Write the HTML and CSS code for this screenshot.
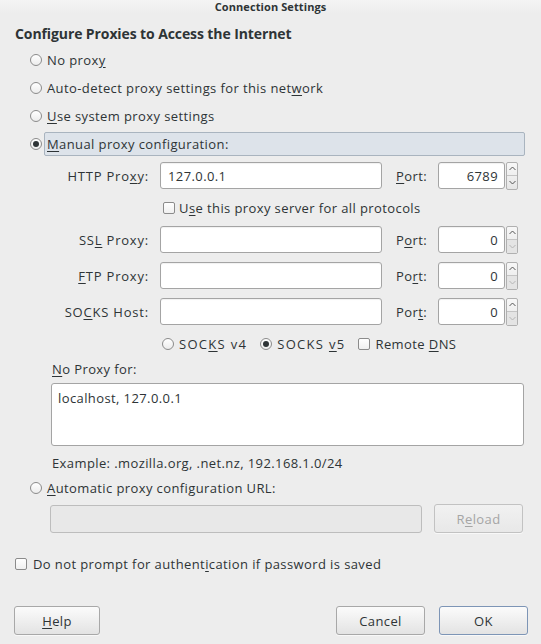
FILE: index.html
```html
<!DOCTYPE html>
<html>
<head>
<meta charset="utf-8">
<link rel="stylesheet" href="styles.css">
</head>
<body>
<div class="titlebar"><span>Connection Settings</span></div>
<div class="dialog">
  <h1 class="heading">Configure Proxies to Access the Internet</h1>
  <div class="options">
    <label class="opt"><span class="radio"></span><span class="txt">No prox<u>y</u></span></label>
    <label class="opt"><span class="radio"></span><span class="txt">Auto-detect proxy settings for this net<u>w</u>ork</span></label>
    <label class="opt"><span class="radio"></span><span class="txt"><u>U</u>se system proxy settings</span></label>
    <label class="opt manual"><span class="radio checked"></span><span class="txt hl"><u>M</u>anual proxy configuration:</span></label>
  </div>

  <div class="proxy-grid">
    <span class="lbl">HTTP Pro<u>x</u>y:</span>
    <input class="entry" value="127.0.0.1">
    <span class="plbl"><u>P</u>ort:</span>
    <div class="spin"><input class="entry num" value="6789"><span class="spinbtns"><span class="sb up"><svg width="7" height="5" viewBox="0 0 7 5"><path d="M0.5 4 L3.5 1 L6.5 4" fill="none" stroke="#555" stroke-width="1"/></svg></span><span class="sb down"><svg width="7" height="5" viewBox="0 0 7 5"><path d="M0.5 1 L3.5 4 L6.5 1" fill="none" stroke="#555" stroke-width="1"/></svg></span></span></div>

    <label class="allproto"><span class="check"></span><span>U<u>s</u>e this proxy server for all protocols</span></label>

    <span class="lbl">SS<u>L</u> Proxy:</span>
    <input class="entry" value="">
    <span class="plbl">P<u>o</u>rt:</span>
    <div class="spin"><input class="entry num" value="0"><span class="spinbtns"><span class="sb up"><svg width="7" height="5" viewBox="0 0 7 5"><path d="M0.5 4 L3.5 1 L6.5 4" fill="none" stroke="#555" stroke-width="1"/></svg></span><span class="sb down dis"><svg width="7" height="5" viewBox="0 0 7 5"><path d="M0.5 1 L3.5 4 L6.5 1" fill="none" stroke="#b5b5b5" stroke-width="1"/></svg></span></span></div>

    <span class="lbl"><u>F</u>TP Proxy:</span>
    <input class="entry" value="">
    <span class="plbl">Po<u>r</u>t:</span>
    <div class="spin"><input class="entry num" value="0"><span class="spinbtns"><span class="sb up"><svg width="7" height="5" viewBox="0 0 7 5"><path d="M0.5 4 L3.5 1 L6.5 4" fill="none" stroke="#555" stroke-width="1"/></svg></span><span class="sb down dis"><svg width="7" height="5" viewBox="0 0 7 5"><path d="M0.5 1 L3.5 4 L6.5 1" fill="none" stroke="#b5b5b5" stroke-width="1"/></svg></span></span></div>

    <span class="lbl">SO<u>C</u>KS Host:</span>
    <input class="entry" value="">
    <span class="plbl">Por<u>t</u>:</span>
    <div class="spin"><input class="entry num" value="0"><span class="spinbtns"><span class="sb up"><svg width="7" height="5" viewBox="0 0 7 5"><path d="M0.5 4 L3.5 1 L6.5 4" fill="none" stroke="#555" stroke-width="1"/></svg></span><span class="sb down dis"><svg width="7" height="5" viewBox="0 0 7 5"><path d="M0.5 1 L3.5 4 L6.5 1" fill="none" stroke="#b5b5b5" stroke-width="1"/></svg></span></span></div>

    <div class="socksver">
      <label class="item socks"><span class="radio"></span><span>SOC<u>K</u>S v4</span></label>
      <label class="item socks"><span class="radio checked"></span><span>SOCKS <u>v</u>5</span></label>
      <label class="item"><span class="check"></span><span>Remote <u>D</u>NS</span></label>
    </div>
  </div>

  <div class="noproxy">
    <div class="np-label"><u>N</u>o Proxy for:</div>
    <textarea class="area">localhost, 127.0.0.1</textarea>
    <div class="example">Example: .mozilla.org, .net.nz, 192.168.1.0/24</div>
  </div>

  <label class="opt auto"><span class="radio"></span><span class="txt"><u>A</u>utomatic proxy configuration URL:</span></label>
  <div class="auto-row">
    <input class="entry url" disabled value="">
    <button class="btn reload" disabled>R<u>e</u>load</button>
  </div>

  <label class="prompt"><span class="check"></span><span>Do not prompt for authent<u>i</u>cation if password is saved</span></label>

  <div class="buttons">
    <button class="btn help"><u>H</u>elp</button>
    <span class="spacer"></span>
    <button class="btn cancel">Cancel</button>
    <button class="btn ok">OK</button>
  </div>
</div>
</body>
</html>
```

FILE: styles.css
```css
* { box-sizing: border-box; }
html, body { margin: 0; padding: 0; }
body {
  width: 541px;
  height: 644px;
  overflow: hidden;
  background: #ededed;
  color: #2e3436;
  font-family: "Open Sans", "DejaVu Sans", sans-serif;
  font-size: 13px;
  letter-spacing: 0.4px;
}
u { text-decoration: underline; text-underline-offset: 2px; }

.titlebar {
  height: 14px;
  padding-top: 1px;
  text-align: center;
  font-size: 11px;
  line-height: 12px;
  font-weight: bold;
  letter-spacing: 0.1px;
  color: #2e3436;
  background: linear-gradient(#f4f4f4, #ededed);
}

.dialog { padding: 0 13px 0 15px; }

.heading {
  margin: 10px 0 0 0;
  font-size: 14px;
  line-height: 20px;
  font-weight: bold;
  letter-spacing: -0.1px;
}

.options { margin: 2px 3px 0 15px; display: flex; flex-direction: column; }
.opt { display: flex; align-items: center; height: 28px; }
.opt .radio { margin-right: 5px; }
.opt.manual .radio { margin-right: 2px; }
.hl {
  flex: 1;
  height: 24px;
  line-height: 22px;
  padding-left: 2px;
  background: #dde3ea;
  border: 1px solid #a9b4bf;
  border-radius: 2px;
}

.radio {
  width: 12px; height: 12px;
  border: 1px solid #8b8b8b;
  border-radius: 50%;
  background: linear-gradient(#ffffff, #ececec);
  display: inline-flex;
  align-items: center;
  justify-content: center;
  flex: none;
}
.radio.checked::after {
  content: "";
  width: 6px; height: 6px;
  border-radius: 50%;
  background: #2e3436;
}
.check {
  width: 12px; height: 12px;
  border: 1px solid #8b8b8b;
  border-radius: 2px;
  background: linear-gradient(#ffffff, #f0f0f0);
  flex: none;
  display: inline-block;
}

.proxy-grid {
  margin: 4px 0 0 29px;
  display: grid;
  grid-template-columns: 116px 222px 56px 80px;
  grid-template-rows: 27px 19px 27px 27px 27px 19px;
  row-gap: 9px;
  align-items: center;
}
.lbl { text-align: right; padding-right: 11px; white-space: nowrap; letter-spacing: 0.8px; }
.plbl { padding-left: 14px; }

.entry {
  height: 27px;
  width: 100%;
  border: 1px solid #a4a4a4;
  border-radius: 3px;
  background: #fff;
  font: inherit;
  letter-spacing: inherit;
  color: #2e3436;
  padding: 0 6px 0 7px;
  outline: none;
  box-shadow: inset 0 1px 1px rgba(0,0,0,0.06);
}
.spin { display: flex; align-items: center; height: 27px; }
.spin .num { width: 67px; text-align: right; }
.spinbtns {
  width: 13px; height: 28px;
  margin-left: 1px;
  display: flex; flex-direction: column;
  border: 1px solid #b0b0b0;
  border-radius: 2px;
  background: linear-gradient(#f7f7f7, #e6e6e6);
}
.sb { flex: 1; display: flex; align-items: center; justify-content: center; }
.sb.down { border-top: 1px solid #c4c4c4; }
.sb.dis { background: #e4e4e4; }

.allproto {
  grid-column: 2 / 5;
  display: flex; align-items: center;
  padding-left: 3px;
  white-space: nowrap;
}
.allproto .check { margin-right: 4px; }

.socksver {
  grid-column: 2 / 5;
  display: flex; align-items: center;
  padding-left: 2px;
  white-space: nowrap;
}
.socksver .item { display: flex; align-items: center; margin-right: 14px; }
.socksver .item.socks { letter-spacing: 1.3px; margin-right: 13px; }
.socksver .item .radio, .socksver .item .check { margin-right: 5px; }

.noproxy { margin: 7px 4px 0 36px; }
.np-label { line-height: 18px; padding-left: 1px; }
.area {
  display: block;
  margin-top: 5px;
  width: 473px;
  height: 63px;
  resize: none;
  border: 1px solid #a4a4a4;
  border-radius: 3px;
  background: #fff;
  font: inherit;
  letter-spacing: inherit;
  color: #2e3436;
  padding: 5px 6px;
  outline: none;
}
.example { margin-top: 8px; line-height: 18px; padding-left: 1px; }

.opt.auto { margin: 6px 0 0 15px; height: 20px; }

.auto-row {
  margin: 6px 0 0 35px;
  display: flex; align-items: center;
}
.entry.url {
  width: 372px; height: 28px;
  background: #e8e8e8;
  border-color: #bdbdbd;
  box-shadow: none;
}
.btn {
  height: 29px;
  font: inherit;
  letter-spacing: inherit;
  color: #2e3436;
  border: 1px solid #a8a8a8;
  border-radius: 3px;
  background: linear-gradient(#fbfbfb, #e3e3e3);
  padding: 0;
  box-shadow: 0 1px 0 rgba(255,255,255,0.6);
}
.reload {
  margin-left: 12px;
  width: 89px;
  color: #a5a5a5;
  border-color: #c2c2c2;
  background: linear-gradient(#f1f1f1, #e8e8e8);
}

.prompt {
  margin-top: 21px;
  height: 20px;
  display: flex; align-items: center;
}
.prompt .check { margin-right: 6px; }

.buttons {
  margin: 32px 0 0 -1px;
  display: flex; align-items: center;
}
.spacer { flex: 1; }
.help { width: 86px; }
.cancel { width: 89px; margin-right: 14px; }
.ok { width: 89px; border-color: #7d95b6; }
```
